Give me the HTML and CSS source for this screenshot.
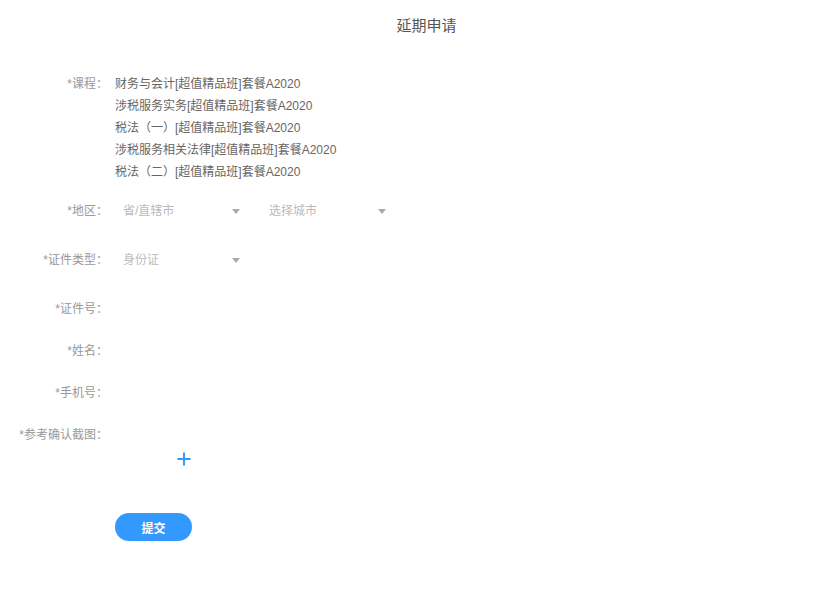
FILE: index.html
```html
<!DOCTYPE html>
<html lang="zh-CN">
<head>
<meta charset="utf-8">
<title>延期申请</title>
<link rel="stylesheet" href="styles.css">
</head>
<body>
<div class="page">
  <h1 class="title">延期申请</h1>
  <div class="form">
    <div class="row row-course">
      <div class="label">*课程：</div>
      <div class="content courses">
        <div>财务与会计[超值精品班]套餐A2020</div>
        <div>涉税服务实务[超值精品班]套餐A2020</div>
        <div>税法（一）[超值精品班]套餐A2020</div>
        <div>涉税服务相关法律[超值精品班]套餐A2020</div>
        <div>税法（二）[超值精品班]套餐A2020</div>
      </div>
    </div>
    <div class="row row-region">
      <div class="label">*地区：</div>
      <div class="content selects">
        <div class="select"><span class="ph">省/直辖市</span><span class="caret"></span></div>
        <div class="select"><span class="ph">选择城市</span><span class="caret"></span></div>
      </div>
    </div>
    <div class="row row-type">
      <div class="label">*证件类型：</div>
      <div class="content selects">
        <div class="select"><span class="ph">身份证</span><span class="caret"></span></div>
      </div>
    </div>
    <div class="row row-idno">
      <div class="label">*证件号：</div>
      <div class="content"></div>
    </div>
    <div class="row row-name">
      <div class="label">*姓名：</div>
      <div class="content"></div>
    </div>
    <div class="row row-phone">
      <div class="label">*手机号：</div>
      <div class="content"></div>
    </div>
    <div class="row row-shot">
      <div class="label">*参考确认截图：</div>
      <div class="content"></div>
    </div>
    <div class="row row-upload">
      <div class="label"></div>
      <div class="content">
        <div class="upload">
          <svg width="14" height="14" viewBox="0 0 14 14"><path d="M7 0.5V13.5M0.5 7H13.5" stroke="#3399ff" stroke-width="2" fill="none"/></svg>
        </div>
      </div>
    </div>
    <div class="row row-submit">
      <div class="label"></div>
      <div class="content">
        <button class="submit">提交</button>
      </div>
    </div>
  </div>
</div>
</body>
</html>
```

FILE: styles.css
```css
html, body {
  margin: 0;
  padding: 0;
  background: #fff;
}
body {
  font-family: "Liberation Sans", "Noto Sans CJK SC", sans-serif;
  font-size: 12px;
  color: #666;
}
.page {
  width: 840px;
}
.title {
  margin: 0;
  height: 52px;
  line-height: 52px;
  text-align: center;
  font-size: 15px;
  font-weight: normal;
  color: #555;
  padding-left: 13px;
}
.form {
  padding-top: 21px;
}
.row {
  display: flex;
  align-items: flex-start;
}
.label {
  width: 108px;
  flex: none;
  text-align: right;
  line-height: 22px;
  color: #999;
  white-space: nowrap;
}
.content {
  margin-left: 7px;
  line-height: 22px;
  min-height: 22px;
}
.courses {
  color: #666;
}
.row-region { margin-top: 17px; }
.row-type { margin-top: 27px; }
.row-idno { margin-top: 27px; }
.row-name { margin-top: 20px; }
.row-phone { margin-top: 20px; }
.row-shot { margin-top: 20px; }
.selects {
  display: flex;
  gap: 16px;
}
.select {
  width: 130px;
  height: 22px;
  display: flex;
  align-items: center;
  justify-content: space-between;
  padding: 0 5px 0 8px;
  box-sizing: border-box;
}
.ph {
  color: #bbb;
}
.caret {
  width: 0;
  height: 0;
  border-left: 4px solid transparent;
  border-right: 4px solid transparent;
  border-top: 5px solid #aaa;
}
.upload {
  width: 138px;
  height: 26px;
  display: flex;
  align-items: center;
  justify-content: center;
}
.upload svg {
  display: block;
}
.row-submit {
  margin-top: 41px;
}
.submit {
  width: 77px;
  height: 28px;
  border: none;
  border-radius: 14px;
  background: #3399ff;
  color: #fff;
  font-family: "Liberation Sans", "Noto Sans CJK SC", sans-serif;
  font-size: 12px;
  font-weight: bold;
  padding: 0;
  cursor: pointer;
}
```
